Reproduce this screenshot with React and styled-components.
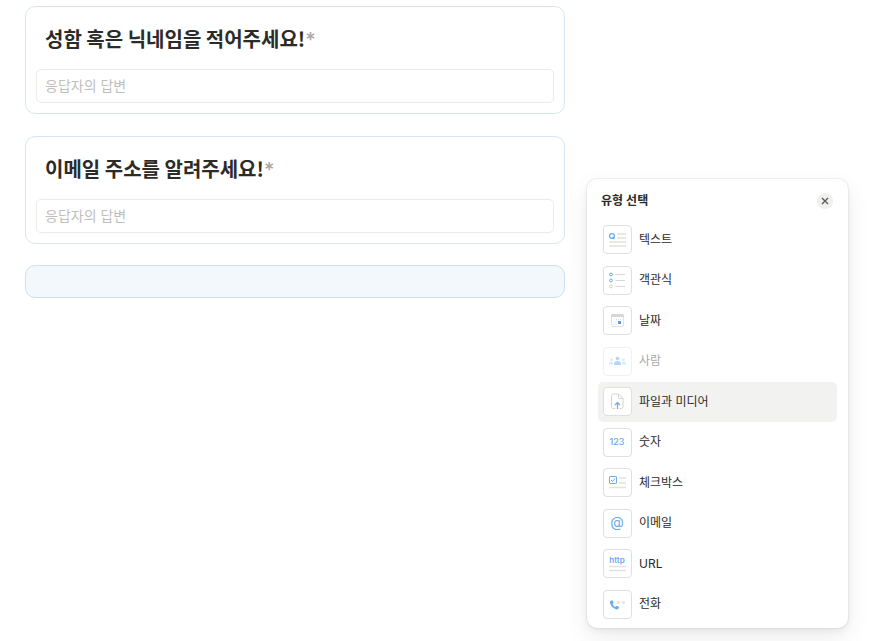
import React from "react";
import styled, { createGlobalStyle } from "styled-components";

const blue = "#6aabea";
const gray = "#e3e2e0";

const GlobalStyle = createGlobalStyle`
  * { box-sizing: border-box; }
  body {
    margin: 0;
    background: #fff;
    color: #2c2b28;
    font-family: Inter, "Noto Sans CJK KR", sans-serif;
  }
  button, input { font: inherit; color: inherit; }
`;

const Page = styled.main`
  display: flex;
  align-items: flex-start;
  gap: 22px;
  min-height: 100vh;
  padding: 6px 29px 12px 25px;
`;

const Form = styled.form`
  flex: 1;
  min-width: 0;
`;

const Question = styled.section`
  padding: 16px 10px 10px;
  margin-bottom: 22px;
  border: 1px solid #d6e6f5;
  border-radius: 10px;
  background: #fff;
`;

const QuestionLabel = styled.label`
  display: block;
  height: 32px;
  padding: 0 9px;
  margin-bottom: 14px;
  font-family: "Noto Sans CJK KR", sans-serif;
  font-size: 20px;
  font-weight: 700;
  line-height: 32px;
`;

const Required = styled.span`
  color: #a9a8a5;
  font-family: Inter, sans-serif;
  font-weight: 500;
`;

const Answer = styled.input`
  display: block;
  width: 100%;
  height: 34px;
  padding: 0 8px 2px;
  border: 1px solid #ecebea;
  border-radius: 5px;
  background: #fff;
  font-size: 14px;
  outline: none;
  &::placeholder { color: #bfbebb; opacity: 1; }
`;

const DropSlot = styled.div`
  height: 33px;
  margin-top: -1px;
  border: 1px solid #cbe0f4;
  border-radius: 10px;
  background: #f3f8fc;
`;

const Panel = styled.aside`
  flex: 0 0 261px;
  margin-top: 173px;
  padding: 9px 11px 3px;
  border-radius: 10px;
  background: #fff;
  box-shadow: 0 0 0 1px rgba(15, 15, 15, 0.05), 0 3px 6px rgba(15, 15, 15, 0.05),
    0 9px 24px rgba(15, 15, 15, 0.08);
`;

const PanelHeader = styled.header`
  display: flex;
  align-items: center;
  justify-content: space-between;
  height: 26px;
  margin-bottom: 6px;
  padding: 0 4px 0 3px;
`;

const PanelTitle = styled.h2`
  margin: 0;
  font-size: 12px;
  font-weight: 600;
  line-height: 18px;
`;

const CloseButton = styled.button`
  display: flex;
  align-items: center;
  justify-content: center;
  width: 16px;
  height: 16px;
  padding: 0;
  border: 0;
  border-radius: 50%;
  background: #f0f0ef;
  color: #5b5a57;
`;

const TypeList = styled.ul`
  display: grid;
  grid-auto-rows: 1fr;
  height: 405px;
  margin: 0;
  padding: 0;
  list-style: none;
`;

const TypeButton = styled.button`
  display: flex;
  align-items: center;
  gap: 7px;
  width: 100%;
  height: 40px;
  padding: 0 5px 1px;
  border: 0;
  border-radius: 5px;
  background: ${(p) => (p.$active ? "#f2f2f1" : "transparent")};
  font-size: 12px;
  text-align: left;
  cursor: pointer;
  &:disabled { opacity: 0.42; color: inherit; cursor: default; }
`;

const TypeName = styled.span`
  line-height: 18px;
`;

const Tile = styled.span`
  display: block;
  flex: none;
  width: 29px;
  height: 29px;
  border: 1px solid #dfdfde;
  border-radius: 4px;
  background: #fff;
`;

const Drawing = styled.svg`
  display: block;
  width: 100%;
  height: 100%;
`;

const icons = {
  text: (
    <>
      <circle cx="9" cy="11" r="2.4" stroke={blue} strokeWidth="1.2" />
      <path d="M9.5 11.8l2 2.4" stroke={blue} strokeWidth="1.2" />
      <path d="M14 9h9M14 13h9M6 17h17M6 21h17" stroke={gray} strokeWidth="1.4" />
    </>
  ),
  choice: (
    <>
      <circle cx="8" cy="8.5" r="1.4" stroke={blue} />
      <circle cx="8" cy="14.5" r="1.4" stroke={blue} />
      <circle cx="8" cy="20.5" r="1.4" stroke="#d3d2d0" />
      <path d="M12.5 8.5H22M12.5 14.5H22M12.5 20.5H22" stroke="#d8d7d5" strokeWidth="1.2" />
    </>
  ),
  date: (
    <>
      <rect x="8.5" y="8.5" width="12" height="12" rx="1.5" stroke={gray} />
      <path d="M8 11V9.5Q8 8 9.5 8h10Q21 8 21 9.5V11z" fill="#d8d7d5" />
      <path d="M13 13.5h6M10.5 16h4M10.5 18.3h4" stroke="#dddcda" strokeWidth="1" strokeDasharray="1 1" />
      <rect x="15" y="15" width="3" height="3" fill="#5d9fe0" />
    </>
  ),
  person: (
    <>
      <circle cx="14.5" cy="11.6" r="1.8" fill="#4f9ee9" />
      <path d="M11 18v-1.2c0-3.8 7-3.8 7 0V18z" fill="#4f9ee9" />
      <g fill="#9fcaf3">
        <circle cx="8.5" cy="12.7" r="1.3" />
        <circle cx="20.5" cy="12.7" r="1.3" />
        <path d="M6 17.6v-.8c0-2.1 2.4-2.5 4.2-1.6-.5.7-.8 1.4-.8 2.4zM23 17.6v-.8c0-2.1-2.4-2.5-4.2-1.6.5.7.8 1.4.8 2.4z" />
      </g>
    </>
  ),
  file: (
    <>
      <path
        d="M12.2 21.5h-2c-1 0-1.7-.7-1.7-1.7V8.7c0-1 .7-1.7 1.7-1.7h5.3l4.5 4.5v8.3c0 1-.7 1.7-1.7 1.7h-1.8M15.5 7v3.3c0 .8.4 1.2 1.2 1.2H20"
        stroke="#d5d4d2"
      />
      <path d="M14.5 22v-6.5M12 18l2.5-2.5L17 18" stroke={blue} strokeWidth="1.2" />
    </>
  ),
  check: (
    <>
      <rect x="6.5" y="8.5" width="7" height="7" rx=".6" stroke={blue} />
      <path d="M8.2 12l1.3 1.5 2.6-3" stroke={blue} />
      <path d="M16 10h7M16 15h7M6 19.5h17" stroke={gray} strokeWidth="1.3" />
    </>
  ),
  phone: (
    <>
      <path
        d="M7.3 11.3l1.3-.9c.5-.3 1-.1 1.2.4l.7 1.6c.2.4 0 .8-.3 1.1l-.7.6c.6 1.4 1.5 2.3 2.8 2.9l.7-.7c.3-.3.7-.4 1.1-.2l1.5.7c.5.2.6.7.3 1.1l-.8 1.1c-.3.4-.8.5-1.3.4-3.6-.7-6.2-3.4-6.9-6.9-.1-.5 0-.9.4-1.2z"
        fill={blue}
      />
      <circle cx="15.5" cy="12.5" r="1.4" fill={gray} />
      <circle cx="20.5" cy="12.5" r="1.4" fill={gray} />
    </>
  ),
  number: (
    <text x="14" y="17" textAnchor="middle" fontSize="9" fontWeight="500" fill={blue}>123</text>
  ),
  email: (
    <text x="14" y="18" textAnchor="middle" fontSize="14" fill={blue}>@</text>
  ),
  url: (
    <>
      <text x="14" y="14" textAnchor="middle" fontSize="8" fontWeight="600" fill={blue}>http</text>
      <path d="M6 17.5h17M6 21.5h17" stroke={gray} strokeWidth="1.4" />
    </>
  ),
};

const types = [
  { id: "text", label: "텍스트" },
  { id: "choice", label: "객관식" },
  { id: "date", label: "날짜" },
  { id: "person", label: "사람", disabled: true },
  { id: "file", label: "파일과 미디어", active: true },
  { id: "number", label: "숫자" },
  { id: "check", label: "체크박스" },
  { id: "email", label: "이메일" },
  { id: "url", label: "URL" },
  { id: "phone", label: "전화" },
];

const questions = [
  { id: "name", label: "성함 혹은 닉네임을 적어주세요!" },
  { id: "mail", label: "이메일 주소를 알려주세요!" },
];

export default function App() {
  return (
    <>
      <GlobalStyle />
      <Page>
        <Form>
          {questions.map((q) => (
            <Question key={q.id}>
              <QuestionLabel htmlFor={q.id}>
                {q.label}
                <Required>*</Required>
              </QuestionLabel>
              <Answer id={q.id} type="text" placeholder="응답자의 답변" />
            </Question>
          ))}
          <DropSlot />
        </Form>
        <Panel>
          <PanelHeader>
            <PanelTitle>유형 선택</PanelTitle>
            <CloseButton type="button" aria-label="닫기">
              <svg width="8" height="8" viewBox="0 0 8 8" fill="none" aria-hidden="true">
                <path d="M1 1l6 6M7 1L1 7" stroke="currentColor" strokeWidth="1.4" />
              </svg>
            </CloseButton>
          </PanelHeader>
          <TypeList>
            {types.map((t) => (
              <li key={t.id}>
                <TypeButton type="button" $active={t.active} disabled={t.disabled}>
                  <Tile>
                    <Drawing viewBox="1 1 27 27" fill="none" aria-hidden="true">
                      {icons[t.id]}
                    </Drawing>
                  </Tile>
                  <TypeName>{t.label}</TypeName>
                </TypeButton>
              </li>
            ))}
          </TypeList>
        </Panel>
      </Page>
    </>
  );
}
